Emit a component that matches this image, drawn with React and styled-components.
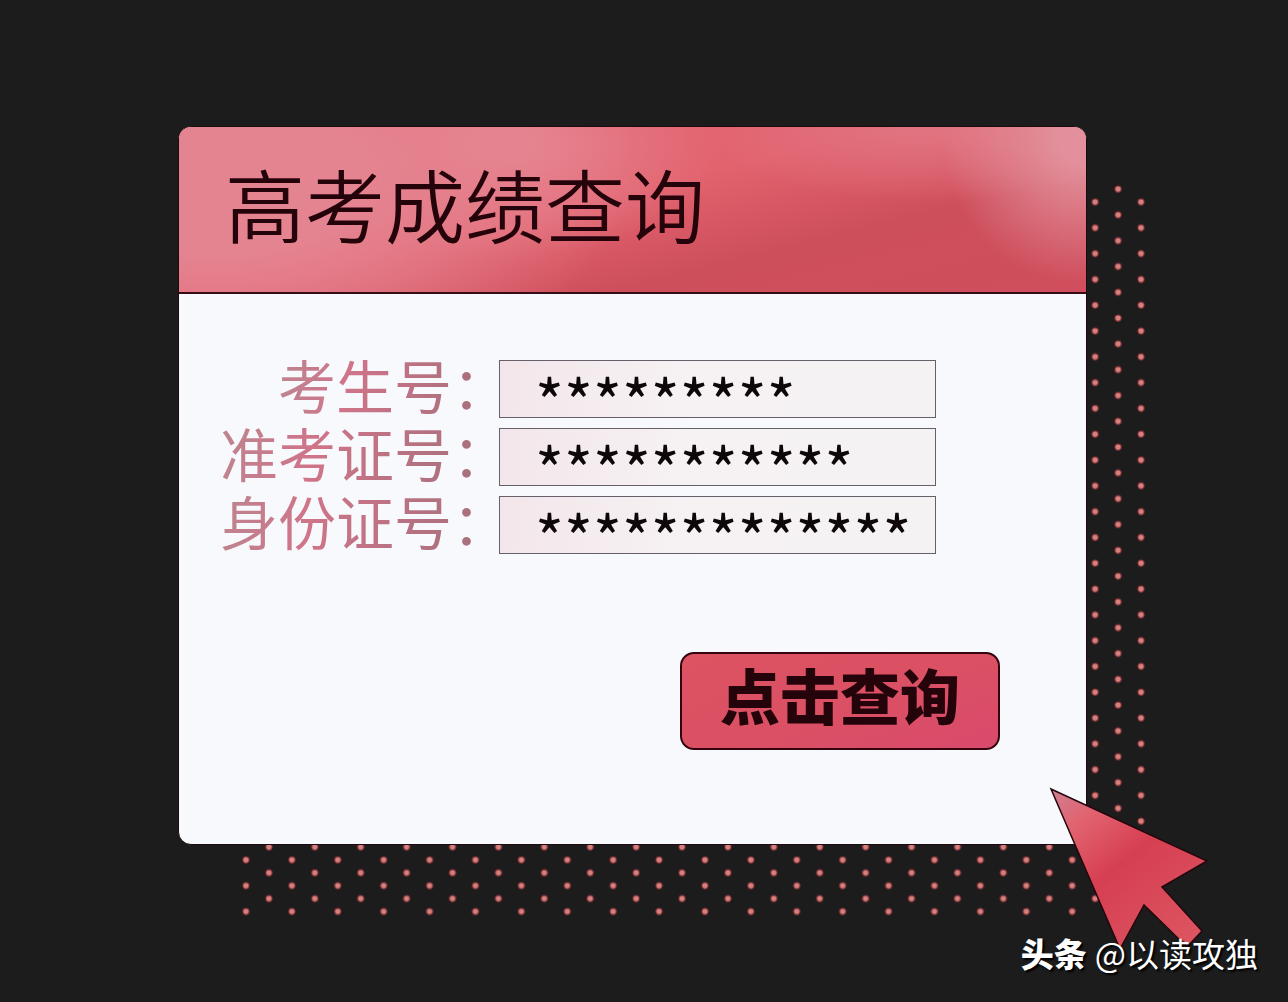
import React from "react";
import styled, { createGlobalStyle } from "styled-components";

const FIELDS = [
  { id: "candidate", label: "考生号：", value: "*********" },
  { id: "ticket", label: "准考证号：", value: "***********" },
  { id: "identity", label: "身份证号：", value: "*************" },
];

function DotShadow() {
  return (
    <Dots aria-hidden="true">
      <defs>
        <pattern
          id="dots"
          width="45.9"
          height="25.8"
          patternUnits="userSpaceOnUse"
        >
          <g fill="#d4827f" stroke="#8e2f36" strokeWidth="1">
            <circle cx="4" cy="4" r="3.1" />
            <circle cx="26.95" cy="16.9" r="3.1" />
          </g>
        </pattern>
      </defs>
      <rect width="100%" height="100%" fill="url(#dots)" />
    </Dots>
  );
}

function Cursor() {
  return (
    <CursorIcon viewBox="0 0 160 164" aria-hidden="true">
      <defs>
        <linearGradient id="cursorFill" x1="0" y1="0" x2="0.8" y2="1">
          <stop offset="0" stopColor="#cf7f92" />
          <stop offset="0.22" stopColor="#e2626f" />
          <stop offset="0.5" stopColor="#d63f52" />
          <stop offset="1" stopColor="#dc5460" />
        </linearGradient>
      </defs>
      <path
        d="M2 2 L158 74 L113 100 L153 144 L138 160 L95 118 L71 162 Z"
        fill="url(#cursorFill)"
        stroke="#26060d"
        strokeWidth="1.5"
      />
    </CursorIcon>
  );
}

function App() {
  return (
    <Page>
      <GlobalStyle />
      <Stage>
        <DotShadow />
        <Card>
          <CardHeader>
            <Title>高考成绩查询</Title>
          </CardHeader>
          <Form onSubmit={(e) => e.preventDefault()}>
            <Fields>
              {FIELDS.map((field) => (
                <React.Fragment key={field.id}>
                  <Label htmlFor={field.id}>{field.label}</Label>
                  <Input id={field.id} type="text" defaultValue={field.value} />
                </React.Fragment>
              ))}
            </Fields>
            <SubmitButton type="submit">点击查询</SubmitButton>
          </Form>
        </Card>
        <Cursor />
      </Stage>
      <Credit>
        <strong>头条</strong>
        <span>@以读攻独</span>
      </Credit>
    </Page>
  );
}

export default App;

const GlobalStyle = createGlobalStyle`
  * {
    box-sizing: border-box;
  }

  body {
    margin: 0;
    background-color: #1c1c1c;
    font-family: "Noto Sans CJK SC", sans-serif;
  }
`;

const Page = styled.main`
  position: relative;
  min-height: 100vh;
  padding: 126px 201px 157px 178px;
`;

const Stage = styled.div`
  position: relative;
`;

const Dots = styled.svg`
  position: absolute;
  top: 59px;
  left: 64px;
  width: calc(100% - 6px);
  height: calc(100% + 12px);
`;

const Card = styled.section`
  position: relative;
  overflow: hidden;
  border: 1px solid #1b0a0e;
  border-radius: 13px;
  background-color: #f8f9fc;
`;

const CardHeader = styled.header`
  padding: 41px 46px 40px;
  border-bottom: 2px solid #350d17;
  background:
    radial-gradient(ellipse 16% 90% at 100% 5%, #e2909b 20%, transparent 100%),
    radial-gradient(ellipse 26% 45% at 82% 0%, #e0737f 10%, transparent 100%),
    radial-gradient(ellipse 24% 70% at 36% 10%, #e58490 10%, transparent 100%),
    radial-gradient(ellipse 46% 130% at 4% 30%, #e58491 35%, transparent 100%),
    linear-gradient(166deg, #e2626e 45%, #ce4f5c 70%, #d04e5d 100%);
`;

const Title = styled.h1`
  margin: 0;
  color: #25030b;
  font-family: "Liberation Serif", "Noto Sans CJK SC", serif;
  font-size: 80px;
  font-weight: 350;
  line-height: 84px;
`;

const Form = styled.form`
  display: flex;
  flex-direction: column;
  padding: 66px 86px 94px 41px;
`;

const Fields = styled.div`
  display: grid;
  grid-template-columns: auto 1fr;
  gap: 10px 18px;
  margin-right: 64px;
`;

const Label = styled.label`
  justify-self: end;
  background: linear-gradient(100deg, #bd8590, #cf7489 35%, #a5707c);
  background-clip: text;
  color: transparent;
  font-family: "Liberation Sans", "Noto Sans CJK SC", sans-serif;
  font-size: 58px;
  font-feature-settings: "halt";
  line-height: 58px;
  white-space: nowrap;
`;

const Input = styled.input`
  width: 100%;
  min-width: 0;
  height: 58px;
  padding: 20px 8px 0 35px;
  border: 1px solid #66606a;
  border-radius: 0;
  outline: 0;
  background: linear-gradient(100deg, #f3e6eb, #f6f2f4 45%, #f5f2f3);
  color: #0d070a;
  font-family: "Noto Sans CJK SC", sans-serif;
  font-size: 62px;
  font-weight: 400;
`;

const SubmitButton = styled.button`
  align-self: flex-end;
  width: 320px;
  height: 98px;
  margin-top: 98px;
  padding: 0 0 14px;
  border: 2px solid #35040f;
  border-radius: 14px;
  background: linear-gradient(160deg, #dc5362, #db5064 55%, #d94a6c);
  color: #25030b;
  font-family: inherit;
  font-size: 60px;
  font-weight: 900;
  line-height: 60px;
  cursor: pointer;
`;

const CursorIcon = styled.svg`
  position: absolute;
  right: -122px;
  bottom: -106px;
  width: 160px;
  height: 164px;
`;

const Credit = styled.p`
  position: absolute;
  right: 30px;
  bottom: 29px;
  display: flex;
  gap: 8px;
  margin: 0;
  color: #fff;
  font-size: 33px;
  line-height: 40px;
  text-shadow: 2px 2px 2px #000;

  strong {
    font-weight: 900;
  }
`;
